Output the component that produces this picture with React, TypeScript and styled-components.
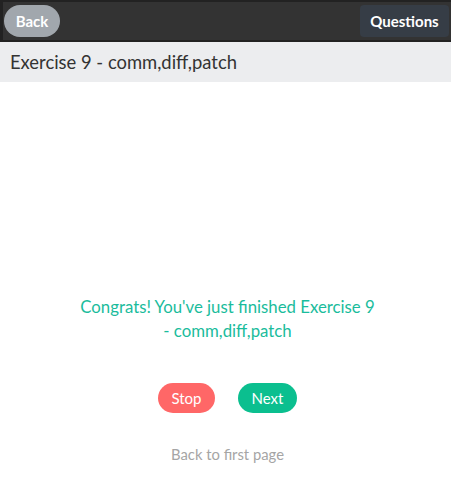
import React from "react";
import styled, { createGlobalStyle } from "styled-components";

const Global = createGlobalStyle`
  html, body { margin: 0; padding: 0; background: #fff; }
  body { font-family: Lato, "Open Sans", sans-serif; }
  * { box-sizing: border-box; }
`;

const TopBar = styled.header`
  height: 42px;
  background: #333333;
  border: 2px solid #222222;
  border-left-width: 3px;
  border-right-width: 0;
  display: flex;
  align-items: center;
  justify-content: space-between;
  padding: 0 0 0 1px;
`;

const BackButton = styled.button`
  height: 32px;
  width: 56px;
  border: none;
  border-radius: 16px;
  background: #a1a7ad;
  color: #fff;
  font-family: Lato, sans-serif;
  font-size: 15px;
  font-weight: 700;
  padding: 0;
  cursor: pointer;
`;

const QuestionsButton = styled.button`
  height: 32px;
  width: 89px;
  border: none;
  border-radius: 4px;
  background: #363d46;
  color: #fff;
  font-family: Lato, sans-serif;
  font-size: 15px;
  font-weight: 700;
  padding: 0;
  margin-right: 2px;
  cursor: pointer;
`;

const TitleBar = styled.div`
  height: 40px;
  background: #ecedef;
  display: flex;
  align-items: center;
  padding-left: 10px;
  font-size: 18.4px;
  color: #333;
`;

const Content = styled.main`
  display: flex;
  flex-direction: column;
  align-items: center;
  padding-top: 213px;
  padding-left: 4px;
`;

const Message = styled.p`
  margin: 0;
  max-width: 300px;
  text-align: center;
  color: #1abc9c;
  font-size: 16.8px;
  line-height: 24px;
`;

const Actions = styled.div`
  display: flex;
  gap: 23px;
  margin-top: 40px;
`;

const Pill = styled.button<{ $color: string; $w: number }>`
  height: 30px;
  width: ${(p) => p.$w}px;
  border: none;
  border-radius: 15px;
  background: ${(p) => p.$color};
  color: #fff;
  font-family: Lato, sans-serif;
  font-size: 15px;
  padding: 0;
  cursor: pointer;
`;

const FirstPage = styled.a`
  margin-top: 32px;
  color: #a5a5a5;
  font-size: 14.8px;
  text-decoration: none;
`;

export default function App() {
  return (
    <>
      <Global />
      <TopBar>
        <BackButton>Back</BackButton>
        <QuestionsButton>Questions</QuestionsButton>
      </TopBar>
      <TitleBar>Exercise 9 - comm,diff,patch</TitleBar>
      <Content>
        <Message>Congrats! You've just finished Exercise 9 - comm,diff,patch</Message>
        <Actions>
          <Pill $color="#ff6767" $w={57}>Stop</Pill>
          <Pill $color="#0bbf8f" $w={59}>Next</Pill>
        </Actions>
        <FirstPage href="#">Back to first page</FirstPage>
      </Content>
    </>
  );
}
